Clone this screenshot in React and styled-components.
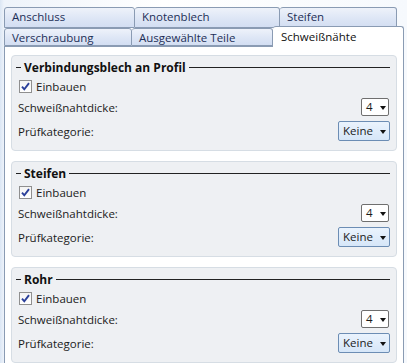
import React from 'react';
import styled, { createGlobalStyle } from 'styled-components';

const GlobalStyle = createGlobalStyle`
  html, body {
    margin: 0;
    padding: 0;
  }
  body {
    width: 407px;
    height: 363px;
    overflow: hidden;
    background: linear-gradient(90deg, #dbe6f4 0px, #eef3fa 4px, #ffffff 40%, #f6f9fd 100%);
    font-family: 'Open Sans', 'Noto Sans', sans-serif;
    font-size: 11.5px;
    color: #1b1b1b;
  }
`;

const tabsTop = [
  { label: 'Anschluss', width: 131 },
  { label: 'Knotenblech', width: 145 },
  { label: 'Steifen', width: 117 },
];

const tabsBottom = [
  { label: 'Verschraubung', width: 128 },
  { label: 'Ausgewählte Teile', width: 141 },
  { label: 'Schweißnähte', width: 131, active: true },
];

const groups = ['Verbindungsblech an Profil', 'Steifen', 'Rohr'];

export default function App() {
  return (
    <>
      <GlobalStyle />
      <Window>
        <TabRow>
          {tabsTop.map((t) => (
            <Tab key={t.label} $width={t.width}>{t.label}</Tab>
          ))}
        </TabRow>
        <TabRow $front>
          {tabsBottom.map((t) => (
            <Tab key={t.label} $width={t.width} $active={t.active} $front>
              {t.label}
            </Tab>
          ))}
        </TabRow>
        <Panel>
          {groups.map((g) => (
            <Group key={g}>
              <GroupTitle>
                <Dash />
                <TitleText>{g}</TitleText>
                <Rule />
              </GroupTitle>
              <CheckRow>
                <CheckBox>
                  <svg width="11" height="11" viewBox="0 0 11 11">
                    <path d="M2 5.6 L4.3 8.3 L9 2.2" fill="none" stroke="#2a3f9a" strokeWidth="1.9" />
                  </svg>
                </CheckBox>
                Einbauen
              </CheckRow>
              <FieldRow>
                <Label>Schweißnahtdicke:</Label>
                <Combo>
                  4 <Arrow />
                </Combo>
              </FieldRow>
              <FieldRow>
                <Label>Prüfkategorie:</Label>
                <DropButton>
                  Keine <Arrow />
                </DropButton>
              </FieldRow>
            </Group>
          ))}
        </Panel>
      </Window>
    </>
  );
}

/// styled components:

const Window = styled.div`
  padding: 7px 3px 0 4px;
  display: flex;
  flex-direction: column;
`;

const TabRow = styled.div`
  display: flex;
  height: ${(p) => (p.$front ? '18px' : '21px')};
  position: relative;
  z-index: ${(p) => (p.$front ? 2 : 1)};
`;

const Tab = styled.div`
  box-sizing: border-box;
  width: ${(p) => p.$width}px;
  height: ${(p) => (p.$active ? '21px' : '100%')};
  margin-top: ${(p) => (p.$active ? '-2px' : '0')};
  margin-bottom: ${(p) => (p.$active ? '-1px' : '0')};
  padding: ${(p) => (p.$active ? '3px 0 0 8px' : '2px 0 0 7px')};
  border: 1px solid #8a9bb3;
  border-bottom: ${(p) => (p.$active ? 'none' : '1px solid #8a9bb3')};
  border-left: ${(p) => (p.$front || p.$active ? '1px solid #8a9bb3' : '1px solid #8a9bb3')};
  border-radius: 3px 3px 0 0;
  background: ${(p) =>
    p.$active ? '#ffffff' : 'linear-gradient(#eef2fa, #dce5f5 60%, #d3def2)'};
  color: ${(p) => (p.$active ? '#111' : '#1d2f57')};
  white-space: nowrap;
  line-height: 14px;
  & + & {
    border-left: none;
  }
`;

const Panel = styled.div`
  box-sizing: border-box;
  width: 400px;
  height: 320px;
  background: #ffffff;
  border: 1px solid #8a9bb3;
  border-bottom: none;
  padding: 8px 6px 0 6px;
  display: flex;
  flex-direction: column;
  gap: 10px;
`;

const Group = styled.div`
  box-sizing: border-box;
  width: 386px;
  flex: none;
  height: 96px;
  background: #eef0f3;
  border: 1px solid #d6dde4;
  border-radius: 4px;
  padding: 1px 6px 0 4px;
  display: flex;
  flex-direction: column;
`;

const GroupTitle = styled.div`
  display: flex;
  align-items: center;
  height: 20px;
  gap: 3px;
`;

const Dash = styled.div`
  width: 5px;
  height: 1px;
  background: #222;
`;

const TitleText = styled.span`
  font-weight: 700;
  font-size: 12px;
  color: #111;
`;

const Rule = styled.div`
  flex: 1;
  height: 1px;
  background: #222;
  margin-right: 0;
`;

const CheckRow = styled.div`
  display: flex;
  align-items: center;
  height: 18px;
  gap: 4px;
  padding-left: 3px;
`;

const CheckBox = styled.div`
  box-sizing: border-box;
  width: 13px;
  height: 13px;
  border: 1px solid #8f8f8f;
  background: linear-gradient(#f4f4f4, #ffffff);
  display: flex;
  align-items: center;
  justify-content: center;
`;

const FieldRow = styled.div`
  display: flex;
  align-items: center;
  justify-content: space-between;
  height: 24px;
  padding-left: 2px;
`;

const Label = styled.span``;

const Arrow = styled.span`
  display: inline-block;
  width: 0;
  height: 0;
  border-left: 3.5px solid transparent;
  border-right: 3.5px solid transparent;
  border-top: 4px solid #111;
  margin-left: 4px;
  vertical-align: middle;
`;

const Combo = styled.div`
  box-sizing: border-box;
  height: 18px;
  width: 28px;
  border: 1px solid #6f6f6f;
  border-radius: 2px;
  background: #ffffff;
  padding-left: 4px;
  line-height: 16px;
  margin-right: 1px;
`;

const DropButton = styled.div`
  box-sizing: border-box;
  height: 20px;
  width: 52px;
  border: 1px solid #6c8db4;
  border-radius: 2px;
  background: linear-gradient(#eaf3fd, #d6e6f8);
  padding-left: 4px;
  line-height: 18px;
`;
